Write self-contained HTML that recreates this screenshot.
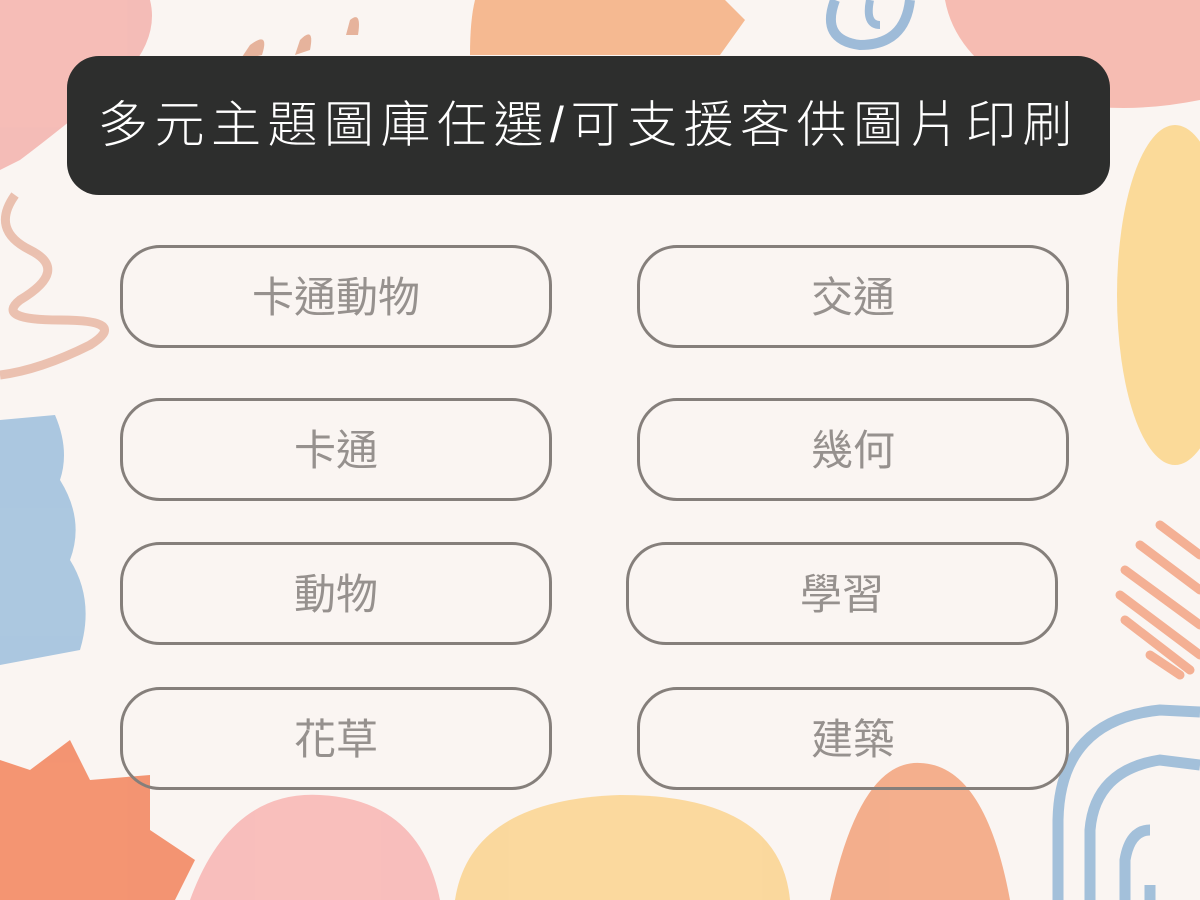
<!DOCTYPE html>
<html><head><meta charset="utf-8"><style>
html,body{margin:0;padding:0}
body{width:1200px;height:900px;position:relative;overflow:hidden;background:#faf5f2;font-family:"Liberation Sans","Noto Sans CJK TC",sans-serif}
svg.bg{position:absolute;left:0;top:0}
.hdr{position:absolute;left:67px;top:56px;width:1043px;height:139px;background:#2d2e2d;border-radius:32px;color:#fff;font-size:50px;line-height:139px;text-align:center;letter-spacing:6.5px;font-weight:300}
.b{position:absolute;width:426px;height:97px;border:3px solid #857f7b;border-radius:40px;color:#96918e;font-size:42px;line-height:100px;text-align:center;letter-spacing:0px}
</style></head><body>
<svg class="bg" width="1200" height="900" viewBox="0 0 1200 900">
<g opacity="0.85">
<path d="M0 0 L150 0 Q160 40 120 80 Q60 130 20 160 L0 170Z" fill="#f4b3ad"/>
<path d="M250 45 Q270 30 262 55 L240 60Z" fill="#e3a88e"/>
<path d="M300 40 Q315 25 310 50 L295 55Z" fill="#e3a88e"/>
<path d="M350 20 Q362 10 358 35 L346 35Z" fill="#e3a88e"/>
<path d="M475 0 L725 0 L745 20 L720 55 L470 55 Q470 20 475 0Z" fill="#f3ae80"/>
<path d="M835 0 Q820 40 860 45 Q905 45 910 0" fill="none" stroke="#8fb1d4" stroke-width="10"/>
<path d="M870 0 Q865 25 880 25" fill="none" stroke="#8fb1d4" stroke-width="8"/>
<path d="M945 0 L1200 0 L1200 100 Q1100 120 1020 90 Q955 55 945 0Z" fill="#f6b3a8"/>
<ellipse cx="1175" cy="295" rx="58" ry="170" fill="#fad58a"/>
<path d="M15 195 Q-10 230 30 250 Q70 270 20 300 Q-5 320 60 320 Q130 320 90 345 Q40 370 0 375" fill="none" stroke="#e8b7a4" stroke-width="9"/>
<path d="M0 420 L55 415 Q70 450 60 480 Q85 520 70 560 Q95 600 80 650 L0 665Z" fill="#9ebfdd"/>
<g stroke="#f3a584" stroke-width="9" stroke-linecap="round">
<line x1="1160" y1="525" x2="1200" y2="555"/><line x1="1140" y1="545" x2="1200" y2="590"/>
<line x1="1125" y1="570" x2="1200" y2="625"/><line x1="1120" y1="595" x2="1200" y2="655"/>
<line x1="1125" y1="620" x2="1190" y2="670"/><line x1="1150" y1="655" x2="1180" y2="675"/>
</g>
<g fill="none" stroke="#95b7d6" stroke-width="11">
<path d="M1058 900 L1058 820 Q1060 720 1160 710 L1200 712"/>
<path d="M1090 900 L1090 830 Q1095 770 1160 760 L1200 765"/>
<path d="M1125 900 L1125 860 Q1130 830 1150 830"/>
<path d="M1150 900 L1150 885"/>
</g>
<path d="M0 760 L30 770 L70 740 L90 780 L150 775 L150 830 L195 860 L175 900 L0 900Z" fill="#f2845c"/>
<path d="M190 900 Q230 790 320 795 Q420 800 440 900Z" fill="#f8b5b3"/>
<path d="M455 900 Q470 800 620 795 Q780 795 790 900Z" fill="#fad38f"/>
<path d="M830 900 Q860 760 920 763 Q985 765 1010 900Z" fill="#f2a27b"/>
</g>
</svg>
<div class="hdr">多元主題圖庫任選/可支援客供圖片印刷</div>
<div class="b" style="left:120px;top:245px">卡通動物</div>
<div class="b" style="left:637px;top:245px">交通</div>
<div class="b" style="left:120px;top:398px">卡通</div>
<div class="b" style="left:637px;top:398px">幾何</div>
<div class="b" style="left:120px;top:542px">動物</div>
<div class="b" style="left:626px;top:542px">學習</div>
<div class="b" style="left:120px;top:687px">花草</div>
<div class="b" style="left:637px;top:687px">建築</div>
</body></html>
